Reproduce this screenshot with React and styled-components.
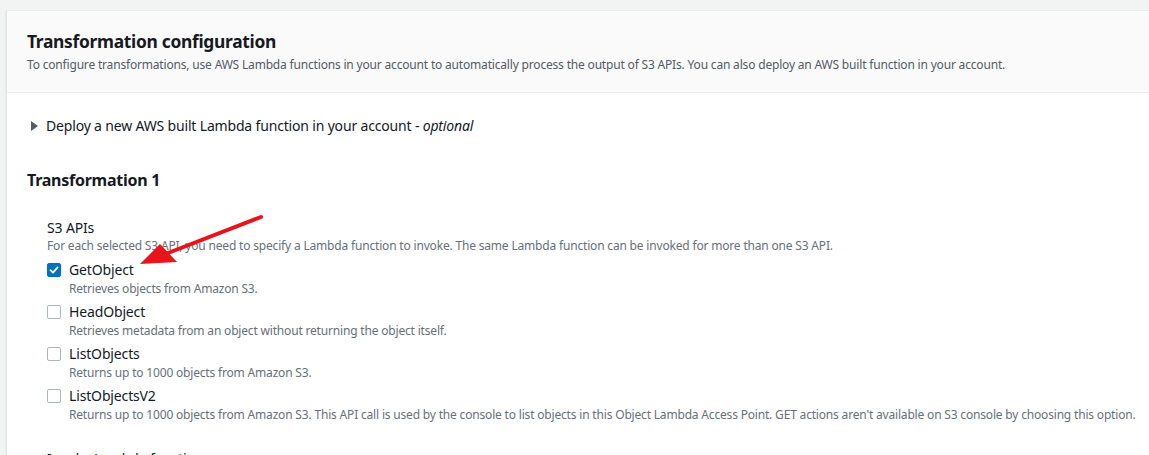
import React from "react";
import styled, { createGlobalStyle } from "styled-components";

const Global = createGlobalStyle`
  html, body { margin: 0; padding: 0; background: #f2f3f3; }
  body { font-family: "Noto Sans", "Open Sans", sans-serif; color: #16191f; }
  * { box-sizing: border-box; }
`;

const Page = styled.div`
  position: relative;
  width: 1149px;
  height: 455px;
  overflow: hidden;
  padding: 10px 0 0 6px;
`;

const Card = styled.section`
  background: #fff;
  border-left: 1px solid #e1e4e4;
  border-top: 1px solid #eaeded;
  width: 1200px;
  height: 600px;
  box-shadow: 0 1px 1px 0 rgba(0, 28, 36, 0.2);
`;

const Header = styled.header`
  background: #fafafa;
  border-bottom: 1px solid #eaeded;
  padding: 18px 20px 0 20px;
  height: 82px;
`;

const Title = styled.h2`
  margin: 0;
  font-size: 17.4px;
  font-weight: 700;
  line-height: 24px;
  letter-spacing: -0.3px;
  color: #16191f;
`;

const Desc = styled.p`
  margin: 0;
  padding-top: 4px;
  font-size: 12px;
  line-height: 16px;
  letter-spacing: -0.18px;
  color: #545b64;
`;

const Body = styled.div`
  padding: 22px 20px 0 20px;
`;

const Expander = styled.div`
  display: flex;
  align-items: center;
  gap: 8px;
  padding-left: 4px;
  font-size: 14px;
  line-height: 22px;
  letter-spacing: -0.17px;
  color: #16191f;
  em { font-style: italic; }
`;

const Caret = styled.span`
  width: 0;
  height: 0;
  border-top: 5px solid transparent;
  border-bottom: 5px solid transparent;
  border-left: 7px solid #545b64;
`;

const SubTitle = styled.h3`
  margin: 32px 0 0 0;
  font-size: 16px;
  font-weight: 700;
  line-height: 22px;
  letter-spacing: -0.25px;
`;

const Field = styled.div`
  padding: 27px 0 0 20px;
`;

const Label = styled.div`
  font-size: 14px;
  line-height: 20px;
  letter-spacing: -0.15px;
  color: #16191f;
`;

const Help = styled.div`
  font-size: 12px;
  line-height: 16px;
  letter-spacing: -0.18px;
  color: #687078;
`;

const Options = styled.div`
  display: flex;
  flex-direction: column;
  gap: 4px;
  padding-top: 5px;
`;

const Option = styled.div`
  display: grid;
  grid-template-columns: 14px 1fr;
  column-gap: 8px;
  align-items: center;
`;

const Box = styled.span`
  width: 14px;
  height: 14px;
  border-radius: 2px;
  border: 1px solid ${(p) => (p.$checked ? "#0073bb" : "#aab7b8")};
  background: ${(p) => (p.$checked ? "#0073bb" : "#fff")};
  display: flex;
  align-items: center;
  justify-content: center;
`;

const OptLabel = styled.span`
  font-size: 14px;
  line-height: 22px;
  letter-spacing: -0.15px;
  color: #16191f;
`;

const OptDesc = styled.span`
  grid-column: 2;
  font-size: 12px;
  line-height: 16px;
  letter-spacing: -0.18px;
  color: #687078;
  white-space: nowrap;
`;

const NextLabel = styled(Label)`
  margin-top: 26px;
`;

const Arrow = styled.svg`
  position: absolute;
  left: 0;
  top: 0;
  pointer-events: none;
`;

const options = [
  { name: "GetObject", desc: "Retrieves objects from Amazon S3.", checked: true },
  { name: "HeadObject", desc: "Retrieves metadata from an object without returning the object itself." },
  { name: "ListObjects", desc: "Returns up to 1000 objects from Amazon S3." },
  {
    name: "ListObjectsV2",
    desc: "Returns up to 1000 objects from Amazon S3. This API call is used by the console to list objects in this Object Lambda Access Point. GET actions aren't available on S3 console by choosing this option.",
  },
];

export default function App() {
  return (
    <>
      <Global />
      <Page>
        <Card>
          <Header>
            <Title>Transformation configuration</Title>
            <Desc>
              To configure transformations, use AWS Lambda functions in your account to automatically process the output of S3 APIs. You can also deploy an AWS built function in your account.
            </Desc>
          </Header>
          <Body>
            <Expander>
              <Caret />
              <span>
                Deploy a new AWS built Lambda function in your account - <em>optional</em>
              </span>
            </Expander>
            <SubTitle>Transformation 1</SubTitle>
            <Field>
              <Label>S3 APIs</Label>
              <Help>
                For each selected S3 API, you need to specify a Lambda function to invoke. The same Lambda function can be invoked for more than one S3 API.
              </Help>
              <Options>
                {options.map((o) => (
                  <Option key={o.name}>
                    <Box $checked={o.checked}>
                      {o.checked && (
                        <svg width="10" height="10" viewBox="0 0 10 10">
                          <path d="M1.5 5.2 L4 7.6 L8.6 2.4" fill="none" stroke="#fff" strokeWidth="1.8" strokeLinecap="round" strokeLinejoin="round" />
                        </svg>
                      )}
                    </Box>
                    <OptLabel>{o.name}</OptLabel>
                    <OptDesc>{o.desc}</OptDesc>
                  </Option>
                ))}
              </Options>
              <NextLabel>Invoke Lambda function</NextLabel>
            </Field>
          </Body>
        </Card>
        <Arrow width="1149" height="455" viewBox="0 0 1149 455">
          <line x1="261" y1="217" x2="168" y2="253" stroke="#e8141b" strokeWidth="4" strokeLinecap="round" />
          <polygon points="140,264 160,244 177,262" fill="#e8141b" />
        </Arrow>
      </Page>
    </>
  );
}
